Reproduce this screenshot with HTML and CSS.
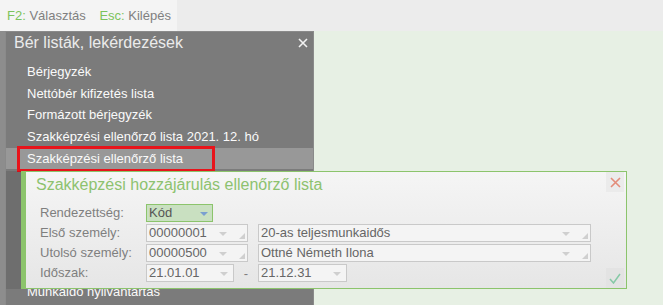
FILE: index.html
```html
<!DOCTYPE html>
<html lang="hu">
<head>
  <meta charset="UTF-8">
  <title>Bér listák, lekérdezések</title>
  <link rel="stylesheet" href="styles.css">
</head>
<body>
  <div class="topbar">
    <div class="keys">
      <span class="key"><b>F2:</b> Választás</span>
      <span class="key"><b>Esc:</b> Kilépés</span>
    </div>
  </div>

  <div class="main">
    <div class="edge"></div>

    <div class="menu">
      <div class="menu-head">
        <span>Bér listák, lekérdezések</span>
        <svg class="menu-close" width="10" height="10" viewBox="0 0 10 10">
          <path d="M1 1 L9 9 M9 1 L1 9" stroke="#f2f2f2" stroke-width="1.6" fill="none"/>
        </svg>
      </div>
      <ul class="items">
        <li>Bérjegyzék</li>
        <li>Nettóbér kifizetés lista</li>
        <li>Formázott bérjegyzék</li>
        <li>Szakképzési ellenőrző lista 2021. 12. hó</li>
        <li class="selected">Szakképzési ellenőrző lista</li>
        <li class="later">Munkaidő nyilvántartás</li>
      </ul>
    </div>

    <div class="desk"></div>

    <!-- lista paraméterei -->
    <div class="dialog">
      <div class="dlg-title">Szakképzési hozzájárulás ellenőrző lista</div>
      <div class="dlg-btn dlg-close">
        <svg width="11" height="11" viewBox="0 0 11 11">
          <path d="M1 1 L10 10 M10 1 L1 10" stroke="#e38c7a" stroke-width="1.6" fill="none"/>
        </svg>
      </div>

      <div class="form">
        <div class="row">
          <label>Rendezettség:</label>
          <div class="field sort"><span class="val">Kód</span><i class="arrow blue"></i></div>
        </div>
        <div class="row">
          <label>Első személy:</label>
          <div class="field code"><span class="val">00000001</span><i class="arrow"></i><i class="grip"></i></div>
          <div class="field name"><span class="val">20-as teljesmunkaidős</span><i class="arrow"></i><i class="grip"></i></div>
        </div>
        <div class="row">
          <label>Utolsó személy:</label>
          <div class="field code"><span class="val">00000500</span><i class="arrow"></i><i class="grip"></i></div>
          <div class="field name"><span class="val">Ottné Németh Ilona</span><i class="arrow"></i><i class="grip"></i></div>
        </div>
        <div class="row">
          <label>Időszak:</label>
          <div class="field date"><span class="val">21.01.01</span><i class="arrow"></i></div>
          <span class="dash">-</span>
          <div class="field date date2"><span class="val">21.12.31</span><i class="arrow"></i></div>
        </div>
      </div>

      <div class="dlg-btn dlg-ok">
        <svg width="12" height="11" viewBox="0 0 12 11">
          <path d="M1 6 L4.5 10 L11 1" stroke="#86c9a6" stroke-width="1.5" fill="none"/>
        </svg>
      </div>
    </div>
  </div>
</body>
</html>
```

FILE: styles.css
```css
body {
  margin: 0;
  font-family: "Liberation Sans", Arial, sans-serif;
  font-size: 13px;
  width: 663px;
  height: 305px;
  overflow: hidden;
  background: #e7f0e4;
}

.topbar {
  height: 31px;
  background: #ececec;
  display: flex;
}

.keys {
  width: 170px;
  padding-left: 7px;
  background: #f4f4f4;
  line-height: 31px;
  color: #808080;
  white-space: nowrap;
}

.key {
  margin-right: 10px;
}

.key b {
  font-weight: normal;
  color: #7cc35b;
}

.main {
  display: flex;
  height: 274px;
  position: relative;
}

.edge {
  width: 5px;
  background: #8d8d8d;
}

.menu {
  width: 307px;
  background: #7b7b7b;
  border: 1px solid #8a8a8a;
  border-bottom: none;
}

.menu-head {
  height: 22px;
  line-height: 22px;
  padding: 0 5px 0 8px;
  display: flex;
  justify-content: space-between;
  align-items: center;
  font-size: 16px;
  color: #ebebeb;
}

.items {
  list-style: none;
  margin: 0;
  padding: 7px 0 0 0;
}

.items li {
  height: 21.7px;
  line-height: 21.7px;
  padding-left: 21px;
  color: #fafafa;
  white-space: nowrap;
}

.items li.selected {
  background: #989898;
  position: relative;
}

.items li.selected::after {
  content: "";
  position: absolute;
  left: 11px;
  top: -1.5px;
  width: 198px;
  height: 26px;
  border: 3px solid #e8141b;
  box-sizing: border-box;
}

.items li.later {
  margin-top: 112px;
}

.desk {
  flex: 1;
  background: #e7f0e4;
}

/* párbeszédablak */
.dialog {
  position: absolute;
  left: 21px;
  top: 140px;
  width: 606px;
  height: 118px;
  box-sizing: border-box;
  border: 1px solid #8cc46c;
  border-left-width: 5px;
  background: linear-gradient(#f5f5f5, #e6e6e6);
  box-shadow: -15px 0 0 rgba(0, 0, 0, 0.1);
}

.dlg-title {
  padding: 1px 0 0 10px;
  height: 24px;
  line-height: 24px;
  font-size: 16px;
  color: #8dc26f;
}

.dlg-btn {
  position: absolute;
  right: 2px;
  width: 18px;
  height: 20px;
  display: flex;
  align-items: center;
  justify-content: center;
}

.dlg-close {
  top: 0;
  background: #ebebeb;
}

.dlg-ok {
  bottom: 0;
  background: #e3e3e3;
}

.form {
  margin-top: 7px;
  display: flex;
  flex-direction: column;
  gap: 2px;
}

.row {
  display: flex;
  align-items: center;
  height: 18px;
}

.row label {
  width: 106px;
  flex-shrink: 0;
  padding-left: 14px;
  color: #7f7f7f;
  line-height: 18px;
}

.field {
  height: 18px;
  flex-shrink: 0;
  box-sizing: border-box;
  border: 1px solid #c9c9c9;
  background: #f4f4f4;
  display: flex;
  align-items: center;
  padding: 0 2px 0 2px;
  color: #666;
}

.field .val {
  flex: 1;
  line-height: 16px;
  white-space: nowrap;
}

.arrow {
  width: 0;
  height: 0;
  border-left: 4px solid transparent;
  border-right: 4px solid transparent;
  border-top: 4px solid #cfcfcf;
  margin-top: 1px;
}

.arrow.blue {
  border-top-color: #7a9fd0;
}

.grip {
  width: 0;
  height: 0;
  border-left: 6px solid transparent;
  border-bottom: 6px solid #cfcfcf;
  margin: 6px 0 0 12px;
  align-self: center;
}

.sort {
  width: 67px;
  padding-right: 4px;
  background: #c9e0c1;
  border-color: #8cc46c;
  color: #555;
}

.code {
  width: 102px;
}

.name {
  width: 333px;
  margin-left: 10px;
}

.date {
  width: 88px;
  padding-right: 5px;
}

.date2 {
  width: 89px;
}

.dash {
  width: 24px;
  flex-shrink: 0;
  text-align: center;
  color: #7f7f7f;
}
```
